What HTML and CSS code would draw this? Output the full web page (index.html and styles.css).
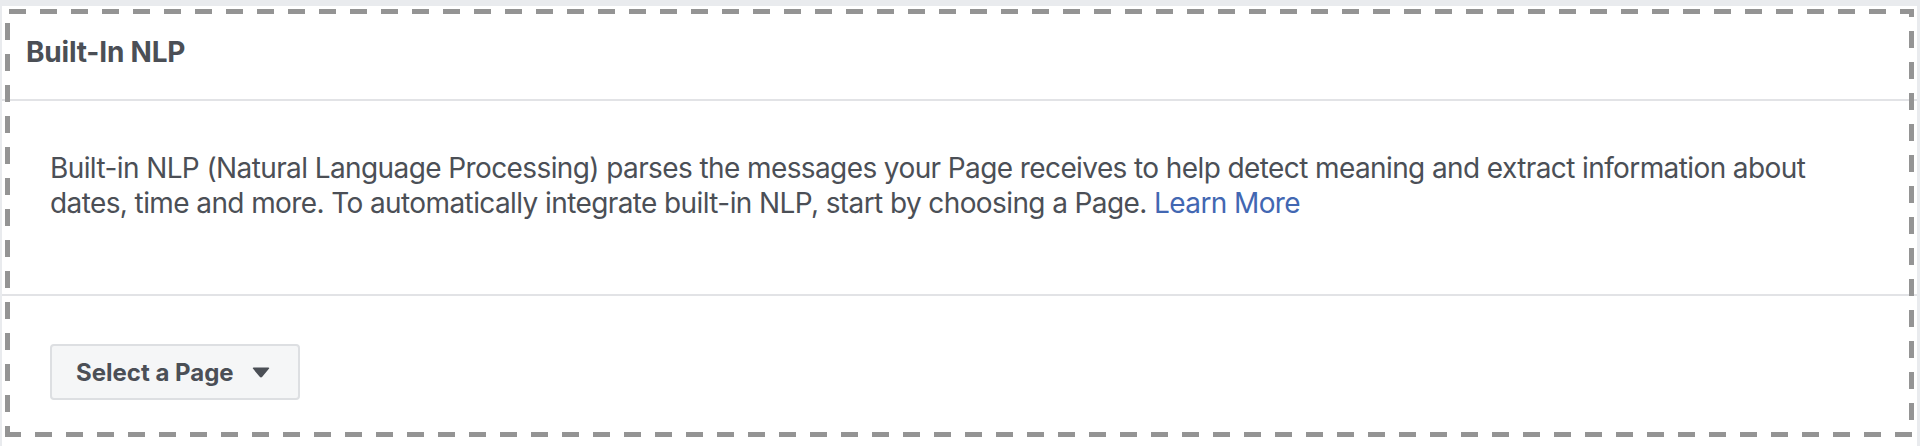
FILE: index.html
```html
<!DOCTYPE html>
<html lang="en">
<head>
<meta charset="utf-8">
<title>Built-In NLP</title>
<link rel="stylesheet" href="styles.css">
</head>
<body>
<section class="card">
  <header class="card-header">
    <h2 class="card-title">Built-In NLP</h2>
  </header>
  <div class="card-body">
    <p class="desc">Built-in NLP (Natural Language Processing) parses the messages your Page receives to help detect meaning and extract information about dates, time and more. To automatically integrate built-in NLP, start by choosing a Page. <a class="link" href="#">Learn More</a></p>
  </div>
  <div class="card-footer">
    <button class="select-btn" type="button">
      <span class="select-label">Select a Page</span>
      <svg class="caret" width="18" height="11" viewBox="0 0 18 11" aria-hidden="true">
        <path d="M1.6 0.5 H16.4 Q18 0.5 16.9 1.8 L10.3 9.8 Q9 11.2 7.7 9.8 L1.1 1.8 Q0 0.5 1.6 0.5 Z" fill="#4b4f56"/>
      </svg>
    </button>
  </div>
</section>
<svg class="highlight" width="1920" height="446" viewBox="0 0 1920 446" aria-hidden="true">
  <g stroke="#949494" stroke-width="5" fill="none" stroke-dasharray="17 14">
    <line x1="9" y1="11.5" x2="1914" y2="11.5"/>
    <line x1="1911.5" y1="9" x2="1911.5" y2="432" stroke-dashoffset="9"/>
    <line x1="5" y1="434.5" x2="1914" y2="434.5" stroke-dashoffset="1"/>
    <line x1="7.5" y1="23" x2="7.5" y2="437"/>
  </g>
</svg>
</body>
</html>
```

FILE: styles.css
```css
html, body {
  margin: 0;
  padding: 0;
}

body {
  position: relative;
  background: #e9ebee;
  font-family: Inter, "Noto Sans", "Liberation Sans", sans-serif;
  color: #4b4f56;
  height: 446px;
  overflow: hidden;
}

.card {
  margin: 6px 3px 0 2px;
  background: #ffffff;
  min-height: 460px;
}

.card-header {
  padding: 29px 24px 29px;
  border-bottom: 2px solid #e2e3e6;
}

.card-title {
  margin: 0;
  font-size: 28px;
  line-height: 35px;
  font-weight: 700;
  letter-spacing: -0.2px;
  color: #4b4f56;
}

.card-body {
  padding: 50px 48px 73px;
  border-bottom: 2px solid #e2e3e6;
}

.desc {
  margin: 0;
  font-size: 28px;
  line-height: 35px;
  letter-spacing: -0.6px;
  color: #4b4f56;
}

.link {
  color: #4267b2;
  text-decoration: none;
}

.card-footer {
  padding: 48px 48px 46px;
}

.select-btn {
  display: inline-flex;
  align-items: center;
  gap: 18px;
  height: 56px;
  box-sizing: border-box;
  padding: 0 28px 0 24px;
  background: #f5f6f7;
  border: 2px solid #dddfe2;
  border-radius: 4px;
  font-family: inherit;
  font-size: 24px;
  font-weight: 700;
  color: #4b4f56;
}

.caret {
  display: block;
  margin-top: 1px;
}

.highlight {
  position: absolute;
  left: 0;
  top: 0;
  pointer-events: none;
}
```
